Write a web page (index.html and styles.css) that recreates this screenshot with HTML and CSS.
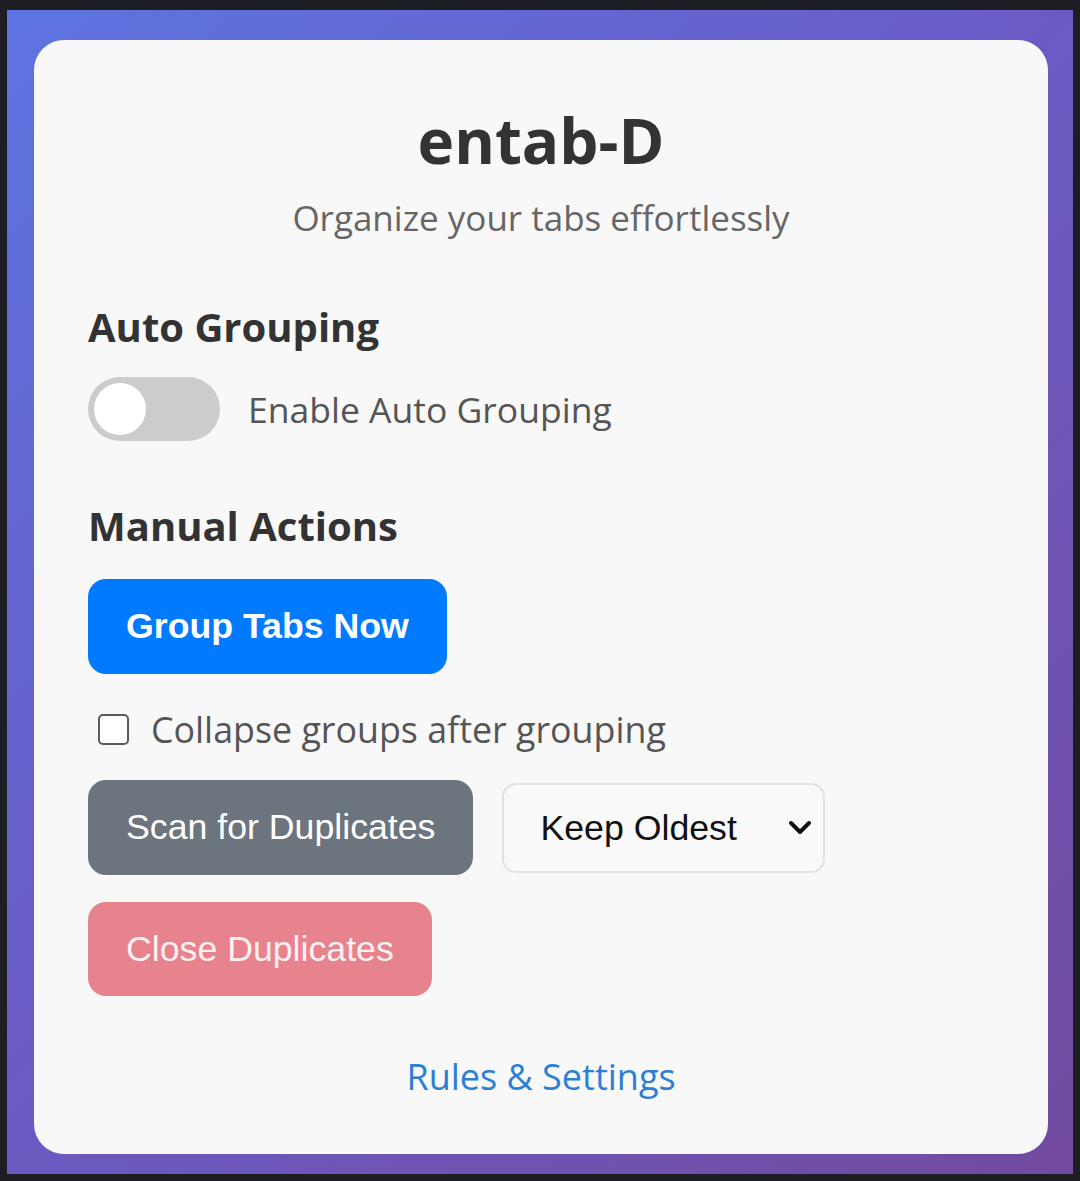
FILE: index.html
```html
<!DOCTYPE html>
<html lang="en">
    <head>
        <meta charset="UTF-8" />
        <meta name="viewport" content="width=device-width, initial-scale=1.0" />
        <title>entab-D</title>
        <link rel="stylesheet" href="styles.css">
    </head>
    <body>
        <div class="frame">
            <main class="card">
                <h1 class="title">entab-D</h1>
                <p class="subtitle">Organize your tabs effortlessly</p>

                <h2 class="section-title">Auto Grouping</h2>
                <label class="toggle-row">
                    <span class="toggle">
                        <input type="checkbox" class="toggle-input" />
                        <span class="toggle-knob"></span>
                    </span>
                    <span class="toggle-label">Enable Auto Grouping</span>
                </label>

                <h2 class="section-title section-title--manual">Manual Actions</h2>
                <button class="btn btn-primary">Group Tabs Now</button>

                <label class="check-row">
                    <input type="checkbox" class="check" />
                    <span>Collapse groups after grouping</span>
                </label>

                <div class="dup-row">
                    <button class="btn btn-secondary">Scan for Duplicates</button>
                    <div class="select-wrap">
                        <select class="keep-select">
                            <option>Keep Oldest</option>
                            <option>Keep Newest</option>
                        </select>
                        <svg class="select-arrow" viewBox="0 0 24 16" width="24" height="16">
                            <path d="M3 3 L12 12 L21 3" fill="none" stroke="#111" stroke-width="4" stroke-linecap="round" stroke-linejoin="round"/>
                        </svg>
                    </div>
                </div>

                <button class="btn btn-danger" disabled>Close Duplicates</button>

                <a class="settings-link" href="#">Rules &amp; Settings</a>
            </main>
        </div>
    </body>
</html>
```

FILE: styles.css
```css
* {
    margin: 0;
    box-sizing: border-box;
}

html {
    background: #1d1e23;
}

body {
    margin: 0;
    padding: 10px 7px 6px;
    font-family: "Open Sans", "Noto Sans", sans-serif;
}

.frame {
    padding: 30px 25px 20px 27px;
    background: linear-gradient(135deg, #5d74e2 0%, #6a5cc6 45%, #734ba0 100%);
}

.card {
    display: flex;
    flex-direction: column;
    align-items: flex-start;
    padding: 0 54px 55px;
    background: #f8f8f8;
    border-radius: 30px;
}

.title {
    align-self: stretch;
    margin-top: 64px;
    font-size: 62px;
    line-height: 72px;
    font-weight: 700;
    color: #333;
    text-align: center;
}

.subtitle {
    align-self: stretch;
    margin-top: 20px;
    font-size: 35px;
    line-height: 44px;
    color: #666;
    text-align: center;
}

.section-title {
    margin-top: 63px;
    font-size: 40px;
    line-height: 48px;
    font-weight: 700;
    color: #333;
}

.section-title--manual {
    margin-top: 61px;
}

.toggle-row {
    display: flex;
    align-items: center;
    gap: 28px;
    margin-top: 26px;
    cursor: pointer;
}

.toggle {
    position: relative;
    width: 132px;
    height: 64px;
    border-radius: 32px;
    background: #cccccc;
}

.toggle-input {
    display: none;
}

.toggle-knob {
    position: absolute;
    top: 6px;
    left: 6px;
    width: 52px;
    height: 52px;
    border-radius: 50%;
    background: #fff;
}

.toggle-label {
    font-size: 35.5px;
    line-height: 44px;
    color: #555;
}

.btn {
    height: 95px;
    padding: 0 38px;
    border: none;
    border-radius: 18px;
    font-family: "Liberation Sans", Arial, sans-serif;
    font-size: 35.7px;
    color: #fff;
    cursor: pointer;
}

.btn-primary {
    margin-top: 29px;
    background: #007bff;
    font-weight: 700;
}

.btn-secondary {
    background: #6c757d;
}

.btn-danger {
    margin-top: 27px;
    height: 94px;
    background: #e7838d;
    color: #fdf0f2;
}

.check-row {
    display: flex;
    align-items: center;
    gap: 22px;
    margin-top: 33px;
    padding-left: 10px;
    font-size: 35.8px;
    line-height: 44px;
    color: #555;
}

.check {
    appearance: none;
    width: 31px;
    height: 31px;
    border: 2px solid #5a5a5a;
    border-radius: 5px;
    background: #fff;
}

.dup-row {
    display: flex;
    align-items: center;
    gap: 29px;
    margin-top: 29px;
}

.select-wrap {
    position: relative;
}

.keep-select {
    appearance: none;
    width: 323px;
    height: 90px;
    padding: 0 0 0 36px;
    border: 2px solid #e2e2e2;
    border-radius: 14px;
    background: #f9f9f9;
    font-family: "Liberation Sans", Arial, sans-serif;
    font-size: 35.7px;
    color: #111;
}

.select-arrow {
    position: absolute;
    top: 37px;
    right: 13px;
    pointer-events: none;
}

.settings-link {
    align-self: center;
    margin-top: 59px;
    font-size: 36px;
    line-height: 44px;
    color: #2c7fd4;
    text-decoration: none;
}
```
